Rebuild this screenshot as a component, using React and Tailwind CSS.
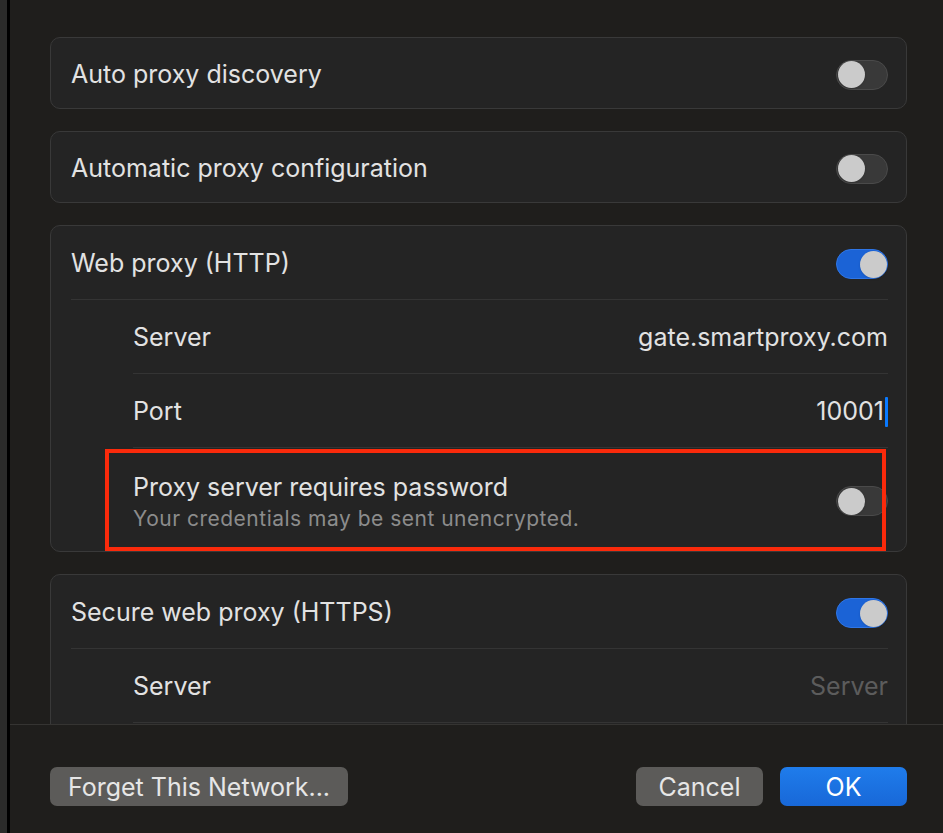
import React from 'react'

const font = { fontFamily: 'Inter, "Noto Sans", sans-serif' }

/* ── Toggle ── */
const Toggle = ({ on }) => (
  <div
    className={`relative mt-[3px] w-[52px] h-[30px] rounded-full border flex-shrink-0 ${
      on ? 'bg-[#1b63d6] border-[#2f76e6]' : 'bg-[#393939] border-[#4a4a4a]'
    }`}
  >
    <span
      className={`absolute top-[0.5px] w-[27px] h-[27px] rounded-full bg-[#cbcbcb] shadow ${
        on ? 'right-[0.5px]' : 'left-[0.5px]'
      }`}
    />
  </div>
)

/* ── Rows ── */
const Label = ({ children, className = 'text-[#e2e2e2]' }) => (
  <span className={`mt-[3px] text-[25px] ${className}`}>{children}</span>
)

const HeaderRow = ({ label, on, divider }) => (
  <div className={`h-[74px] flex items-center justify-between ${divider ? 'border-b border-[#343434]' : ''}`}>
    <Label>{label}</Label>
    <Toggle on={on} />
  </div>
)

const FieldRow = ({ label, value, placeholder, cursor }) => (
  <div className="h-[74px] flex items-center justify-between border-b border-[#343434]">
    <Label>{label}</Label>
    <span className="flex items-center">
      {value ? <Label>{value}</Label> : <Label className="text-[#5c5c5c]">{placeholder}</Label>}
      {cursor && <span className="ml-[1px] mt-[3px] w-[3px] h-[30px] bg-[#0a7aff] rounded-[1px]" />}
    </span>
  </div>
)

const Card = ({ children, className = '' }) => (
  <div className={`rounded-[10px] border border-[#393939] bg-[#242424] pl-[20px] pr-[18px] flex-shrink-0 ${className}`}>
    {children}
  </div>
)

const Button = ({ children, primary, className = '' }) => (
  <div
    role="button"
    className={`h-[39px] rounded-[7px] flex items-center justify-center ${
      primary
        ? 'bg-gradient-to-b from-[#1f7ceb] to-[#1868d8] text-white'
        : 'bg-[#5c5b59] text-[#e6e6e6]'
    } ${className}`}
  >
    <span className="text-[25px] leading-[30px] whitespace-nowrap">{children}</span>
  </div>
)

export default function App() {
  return (
    <div className="w-[943px] h-[833px] bg-[#1f1e1c] flex overflow-hidden" style={font}>
      <div className="w-[7px] bg-[#2b2b2a]" />
      <div className="w-[3px] bg-black" />

      <div className="flex-1 flex flex-col">
        {/* scrolling content */}
        <div className="h-[724px] overflow-hidden pl-[40px] pr-[36px] pt-[37px] flex flex-col gap-[22px]">
          <Card>
            <div className="h-[70px] flex items-center justify-between">
              <Label>Auto proxy discovery</Label>
              <Toggle />
            </div>
          </Card>

          <Card>
            <div className="h-[70px] flex items-center justify-between">
              <Label>Automatic proxy configuration</Label>
              <Toggle />
            </div>
          </Card>

          <Card className="relative">
            <HeaderRow label="Web proxy (HTTP)" on divider />
            <div className="pl-[62px]">
              <FieldRow label="Server" value="gate.smartproxy.com" />
              <FieldRow label="Port" value="10001" cursor />
              <div className="h-[103px] flex items-center justify-between">
                <div className="flex flex-col mt-[3px]">
                  <span className="text-[25px] text-[#e2e2e2] leading-[34px]">Proxy server requires password</span>
                  <span className="text-[21px] tracking-[0.5px] text-[#8c8c8c] leading-[29px]">Your credentials may be sent unencrypted.</span>
                </div>
                <Toggle />
              </div>
            </div>
            {/* highlight */}
            <div className="absolute left-[54px] top-[223px] w-[781px] h-[102px] border-[4px] border-[#fb2a0b]" />
          </Card>

          <Card>
            <HeaderRow label="Secure web proxy (HTTPS)" on divider />
            <div className="pl-[62px]">
              <FieldRow label="Server" placeholder="Server" />
              {/* rest of the list is scrolled out of view */}
              <div className="h-[74px]" />
            </div>
          </Card>
        </div>

        <div className="h-px bg-[#353432]" />

        {/* footer */}
        <div className="flex-1 pl-[40px] pr-[36px] pt-[42px] flex items-start justify-between">
          <Button className="w-[298px]">Forget This Network...</Button>
          <div className="flex gap-[17px]">
            <Button className="w-[127px]">Cancel</Button>
            <Button primary className="w-[127px]">OK</Button>
          </div>
        </div>
      </div>
    </div>
  )
}
